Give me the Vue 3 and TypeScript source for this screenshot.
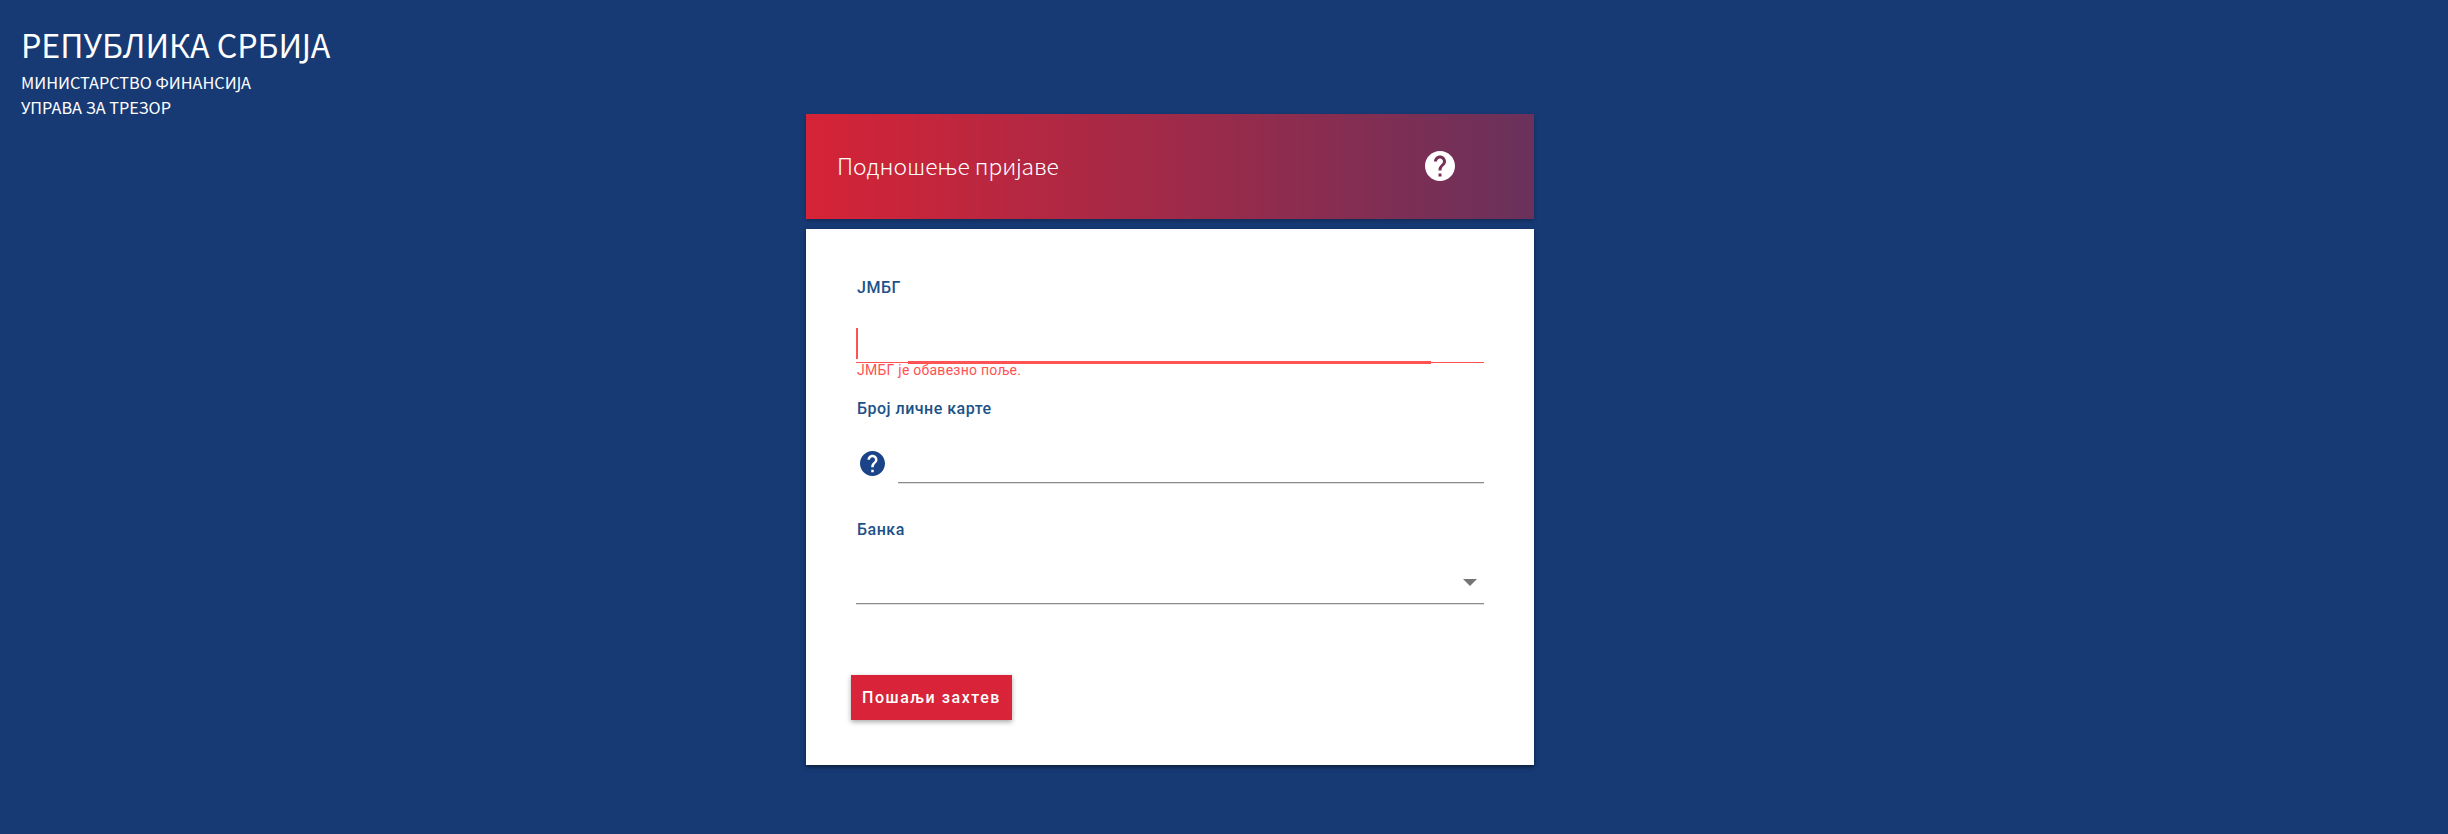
<template>
  <div class="page">
    <header class="brand">
      <div class="brand-title">РЕПУБЛИКА СРБИЈА</div>
      <div class="brand-line">МИНИСТАРСТВО ФИНАНСИЈА</div>
      <div class="brand-line">УПРАВА ЗА ТРЕЗОР</div>
    </header>

    <main class="form-column">
      <div class="form-head">
        <span class="form-title">Подношење пријаве</span>
        <svg class="help-white" viewBox="0 0 24 24">
          <path fill="#fff" :d="helpPath" />
        </svg>
      </div>

      <form class="form-card" @submit.prevent>
        <div class="field field-jmbg">
          <label class="field-label">{{ fields.jmbg }}</label>
          <div class="input-row invalid">
            <span class="caret"></span>
            <span class="ink"></span>
          </div>
          <div class="field-error">ЈМБГ је обавезно поље.</div>
        </div>

        <div class="field field-card">
          <label class="field-label">{{ fields.card }}</label>
          <div class="with-icon">
            <svg class="help-blue" viewBox="2 2 20 20">
              <path fill="#1b4488" :d="helpPath" />
            </svg>
            <div class="input-row"></div>
          </div>
        </div>

        <div class="field field-bank">
          <label class="field-label">{{ fields.bank }}</label>
          <div class="input-row select-row">
            <span class="arrow"></span>
          </div>
        </div>

        <button class="submit" type="submit">Пошаљи захтев</button>
      </form>
    </main>
  </div>
</template>

<script setup lang="ts">
const fields = {
  jmbg: 'ЈМБГ',
  card: 'Број личне карте',
  bank: 'Банка'
}

// material "help" icon
const helpPath =
  'M12 2C6.48 2 2 6.48 2 12s4.48 10 10 10 10-4.48 10-10S17.52 2 12 2zm1 17h-2v-2h2v2zm2.07-7.75l-.9.92C13.45 12.9 13 13.5 13 15h-2v-.5c0-1.1.45-2.1 1.17-2.83l1.24-1.26c.37-.36.59-.86.59-1.41 0-1.1-.9-2-2-2s-2 .9-2 2H8c0-2.21 1.79-4 4-4s4 1.79 4 4c0 .88-.36 1.68-.93 2.25z'
</script>

<style>
html,
body {
  margin: 0;
  background: #173a75;
}
</style>

<style scoped>
.page {
  display: grid;
  grid-template-columns: 806px 728px;
  height: 834px;
  background: #173a75;
  font-family: "Noto Sans CJK SC", "Noto Sans", sans-serif;
  overflow: hidden;
}

.brand {
  padding: 24px 0 0 21px;
  color: #fff;
}

.brand-title {
  font-size: 32.2px;
  font-weight: 400;
  line-height: 40px;
  margin-bottom: 6px;
}

.brand-line {
  font-size: 16.3px;
  line-height: 25px;
}

.form-column {
  padding-top: 114px;
}

.form-head {
  display: flex;
  align-items: center;
  justify-content: space-between;
  box-sizing: border-box;
  height: 105px;
  padding: 0 76px 2px 31px;
  background: linear-gradient(90deg, #d62336 0%, #69315b 100%);
  box-shadow: 0 2px 4px rgba(0, 0, 0, 0.25);
}

.form-title {
  color: #fff;
  font-size: 22.8px;
  font-weight: 300;
}

.help-white {
  width: 36px;
  height: 36px;
}

.form-card {
  box-sizing: border-box;
  height: 536px;
  margin-top: 10px;
  padding: 47px 50px 0 50px;
  background: #fff;
  box-shadow: 0 2px 4px rgba(0, 0, 0, 0.5);
}

.field-label {
  display: block;
  padding-left: 1px;
  color: #1d5288;
  font-family: Roboto, sans-serif;
  font-size: 16px;
  font-weight: 500;
  letter-spacing: 0.5px;
  line-height: 24px;
}

.input-row {
  position: relative;
  flex: 1;
  border-bottom: 1px solid #8c8c8c;
  box-shadow: 0 1px 0 #ddd;
}

.field-jmbg .input-row {
  height: 50px;
  margin-top: 12px;
}

.input-row.invalid {
  border-bottom: 1px solid #ff5252;
  box-shadow: none;
}

.caret {
  position: absolute;
  left: 0;
  top: 16px;
  width: 2px;
  height: 31px;
  background: #ff5252;
}

.ink {
  position: absolute;
  left: 52px;
  right: 53px;
  bottom: -2px;
  height: 3px;
  background: #ff5252;
}

.field-error {
  margin-top: -2px;
  padding-left: 1px;
  color: #ff5252;
  font-family: Roboto, sans-serif;
  font-size: 14px;
  letter-spacing: 0.25px;
  line-height: 18px;
}

.field-card {
  margin-top: 18px;
}

.with-icon {
  display: flex;
  align-items: flex-end;
  margin-top: 12px;
}

.help-blue {
  width: 25px;
  height: 25px;
  margin: 0 13px 7px 4px;
}

.with-icon .input-row {
  height: 49px;
}

.field-bank {
  margin-top: 35px;
}

.select-row {
  height: 49px;
  margin-top: 12px;
}

.arrow {
  position: absolute;
  right: 7px;
  top: 25px;
  border-left: 7px solid transparent;
  border-right: 7px solid transparent;
  border-top: 7px solid #757575;
}

.submit {
  display: block;
  width: 161px;
  height: 45px;
  margin: 71px 0 0 -5px;
  padding: 0;
  border: 0;
  background: #d82338;
  color: #fff;
  font-family: Roboto, sans-serif;
  font-size: 16px;
  font-weight: 500;
  letter-spacing: 1.55px;
  box-shadow: 0 2px 5px rgba(0, 0, 0, 0.35);
}
</style>
